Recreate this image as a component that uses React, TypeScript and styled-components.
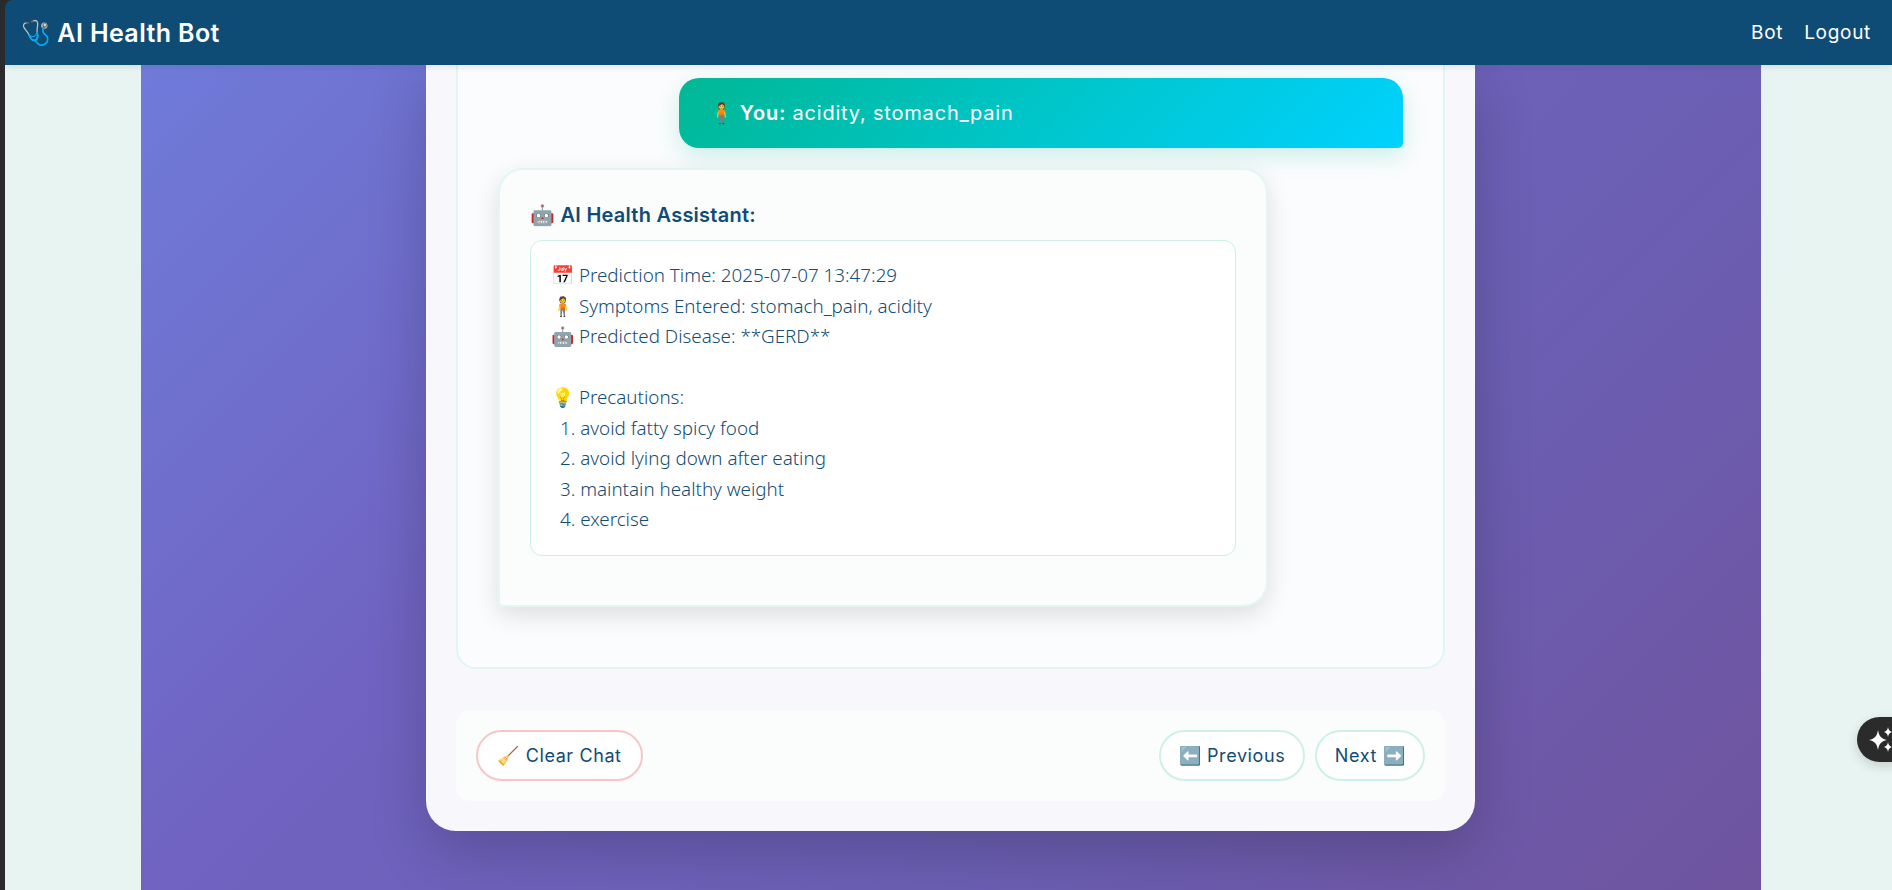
import React from 'react'
import styled, { createGlobalStyle } from 'styled-components'

const heading = `'Inter', 'Noto Sans', sans-serif`
const body = `'Noto Sans', 'Lato', sans-serif`
const emoji = `'Noto Color Emoji', sans-serif`

const GlobalStyle = createGlobalStyle`
  html, body {
    margin: 0;
    height: 100%;
    overflow: hidden;
    background: #2b2b2b;
  }
  #root {
    height: 100%;
  }
`
const Page = styled.div`
  position: relative;
  height: 890px;
  padding-left: 5px;
  display: flex;
  flex-direction: column;
  overflow: hidden;
`
const Navbar = styled.nav`
  position: relative;
  z-index: 2;
  flex: 0 0 65px;
  display: flex;
  align-items: center;
  justify-content: space-between;
  padding: 0 21px 0 16px;
  background: #0f4c75;
  border-top-left-radius: 8px;
  box-shadow: 0 2px 6px rgba(15, 76, 117, 0.12);
`
const Brand = styled.div`
  display: flex;
  align-items: center;
  gap: 6px;
  font-family: ${heading};
  font-size: 25px;
  font-weight: 600;
  letter-spacing: 0.4px;
  color: #fff;
`
const BrandIcon = styled.span`
  font-family: ${emoji};
  font-size: 24px;
`
const NavLinks = styled.div`
  display: flex;
  gap: 21px;
`
const NavLink = styled.a`
  font-family: ${heading};
  font-size: 19px;
  letter-spacing: 0.7px;
  color: #fff;
`
const Main = styled.main`
  flex: 1;
  display: flex;
  justify-content: center;
  padding: 0 131px 0 136px;
  background: #e8f4f1;
`
const Backdrop = styled.div`
  flex: 1;
  display: flex;
  justify-content: center;
  align-items: flex-start;
  background: linear-gradient(135deg, #6f7bd9 0%, #7063c1 34%, #6b5fb4 66%, #6f549f 100%);
`
const Card = styled.section`
  width: 1049px;
  margin-right: 1px;
  box-sizing: border-box;
  padding: 0 30px 30px;
  background: #f8f8fc;
  border-radius: 0 0 30px 30px;
  box-shadow: 0 20px 60px rgba(0, 0, 0, 0.2);
`
const ChatBox = styled.div`
  box-sizing: border-box;
  height: 604px;
  padding: 13px 32px 0 33px;
  background: #fbfcfd;
  border: 2px solid #e0f6f2;
  border-top: none;
  border-radius: 0 0 20px 20px;
  display: flex;
  flex-direction: column;
`
const UserBubble = styled.div`
  box-sizing: border-box;
  align-self: flex-end;
  width: 724px;
  height: 70px;
  margin-right: 8px;
  margin-bottom: 20px;
  padding: 0 30px;
  display: flex;
  align-items: center;
  gap: 5px;
  color: #fff;
  font-family: ${heading};
  font-size: 20px;
  letter-spacing: 0.8px;
  white-space: pre;
  background: linear-gradient(135deg, #00b894, #00d2ff);
  border-radius: 20px 20px 5px 20px;
  box-shadow: 0 8px 25px rgba(0, 184, 148, 0.2);
`
const Bold = styled.strong`
  font-weight: 600;
`
const BotCard = styled.div`
  box-sizing: border-box;
  width: 770px;
  height: 439px;
  margin-left: 7px;
  padding: 32px 30px 0;
  background: #fbfcfc;
  border: 2px solid #e4f6f3;
  border-radius: 25px 25px 25px 5px;
  box-shadow: 0 8px 25px rgba(0, 0, 0, 0.12);
`
const BotTitle = styled.div`
  margin-bottom: 12px;
  font-family: ${heading};
  font-size: 20px;
  font-weight: 600;
  letter-spacing: 0.25px;
  line-height: 26px;
  color: #0f4c75;
`
const ResultBox = styled.div`
  box-sizing: border-box;
  height: 316px;
  padding: 19px 20px;
  background: #fff;
  border: 1px solid #cdf1ea;
  border-radius: 12px;
`
const Line = styled.div<{ $indent?: boolean }>`
  height: 30.5px;
  line-height: 30.5px;
  padding-left: ${(p) => (p.$indent ? '9px' : '0')};
  font-family: ${body};
  font-size: 18.8px;
  font-weight: 300;
  color: #124d74;
  white-space: pre;
`
const Controls = styled.div`
  box-sizing: border-box;
  height: 91px;
  margin-top: 41px;
  padding: 0 20px;
  display: flex;
  align-items: center;
  justify-content: space-between;
  background: #fbfdfd;
  border-radius: 15px;
`
const NavGroup = styled.div`
  display: flex;
  gap: 10px;
`
const PillButton = styled.button<{ $danger?: boolean; $width: number }>`
  box-sizing: border-box;
  width: ${(p) => p.$width}px;
  height: 51px;
  padding: 0;
  font-family: ${heading};
  font-size: 18px;
  letter-spacing: 0.6px;
  color: #0f4c75;
  background: #fff;
  border: 2px solid ${(p) => (p.$danger ? '#f8c6c8' : '#cdf1ea')};
  border-radius: 26px;
`
const AssistantTab = styled.div`
  position: absolute;
  top: 717px;
  left: 1857px;
  width: 60px;
  height: 45px;
  display: flex;
  align-items: center;
  padding-left: 10px;
  box-sizing: border-box;
  background: #2b2b2b;
  border-radius: 23px;
  box-shadow: 0 4px 12px rgba(0, 0, 0, 0.15);
`

const Sparkles = () => (
  <svg width="32" height="32" viewBox="0 0 32 32" fill="#fff">
    <path d="M11 6 C12 12 14 14.5 20 16 C14 17.5 12 20 11 26 C10 20 8 17.5 2 16 C8 14.5 10 12 11 6Z" />
    <path d="M21 3 C21.5 6 22.5 7 25 8 C22.5 9 21.5 10 21 13 C20.5 10 19.5 9 17 8 C19.5 7 20.5 6 21 3Z" />
    <path d="M21 18 C21.5 21 22.5 22 25 23 C22.5 24 21.5 25 21 28 C20.5 25 19.5 24 17 23 C19.5 22 20.5 21 21 18Z" />
  </svg>
)

const results = [
  '📅 Prediction Time: 2025-07-07 13:47:29',
  '🧍 Symptoms Entered: stomach_pain, acidity',
  '🤖 Predicted Disease: **GERD**',
  ' ',
  '💡 Precautions:'
]
const precautions = [
  '1. avoid fatty spicy food',
  '2. avoid lying down after eating',
  '3. maintain healthy weight',
  '4. exercise'
]

const App = () => (
  <>
    <GlobalStyle />
    <Page>
      <Navbar>
        <Brand>
          <BrandIcon>🩺</BrandIcon>
          AI Health Bot
        </Brand>
        <NavLinks>
          <NavLink>Bot</NavLink>
          <NavLink>Logout</NavLink>
        </NavLinks>
      </Navbar>
      <Main>
        <Backdrop>
          <Card>
            <ChatBox>
              <UserBubble>
                <span>🧍</span>
                <span>
                  <Bold>You:</Bold> acidity, stomach_pain
                </span>
              </UserBubble>
              <BotCard>
                <BotTitle>🤖 AI Health Assistant:</BotTitle>
                <ResultBox>
                  {results.map((text) => (
                    <Line key={text}>{text}</Line>
                  ))}
                  {precautions.map((text) => (
                    <Line $indent key={text}>
                      {text}
                    </Line>
                  ))}
                </ResultBox>
              </BotCard>
            </ChatBox>
            <Controls>
              <PillButton $danger $width={167}>
                🧹 Clear Chat
              </PillButton>
              <NavGroup>
                <PillButton $width={146}>⬅️ Previous</PillButton>
                <PillButton $width={110}>Next ➡️</PillButton>
              </NavGroup>
            </Controls>
          </Card>
        </Backdrop>
      </Main>
      <AssistantTab>
        <Sparkles />
      </AssistantTab>
    </Page>
  </>
)

export default App
